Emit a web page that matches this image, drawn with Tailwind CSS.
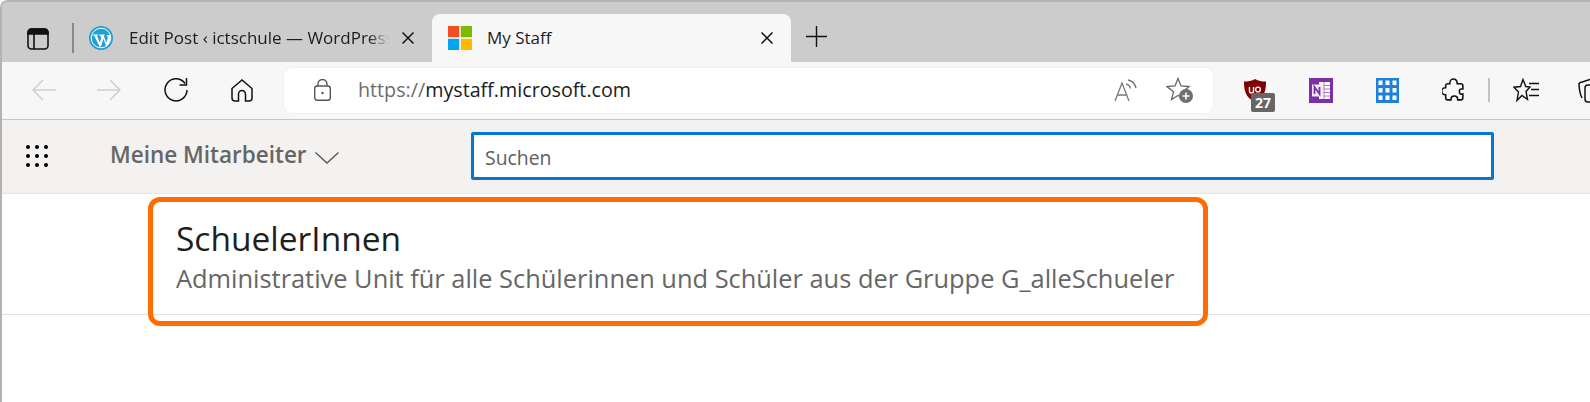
<!DOCTYPE html>
<html lang="de">
<head>
  <meta charset="UTF-8">
  <meta name="viewport" content="width=device-width, initial-scale=1.0">
  <title>My Staff</title>
  <script src="https://cdn.jsdelivr.net/npm/@tailwindcss/browser@4"></script>
</head>
<body class="bg-white w-[1590px] h-[402px] overflow-hidden font-['Open_Sans',sans-serif]">
  <div class="h-[402px] border-l-2 border-t-2 border-[#b3b3b3] rounded-tl-lg overflow-hidden">

    <!-- Tab strip -->
    <div class="h-[60px] bg-[#cccccc] flex items-end">
      <div class="w-[430px] h-[48px] flex items-center shrink-0">
        <svg class="ml-[25px] w-[22px] h-[22px] mt-[2px]" viewBox="0 0 22 22" fill="none" stroke="#111" stroke-width="1.6">
          <rect x="1" y="1" width="20" height="20" rx="3.5"/>
          <path d="M1 6V4.5A3.5 3.5 0 0 1 4.5 1h13A3.5 3.5 0 0 1 21 4.5V6Z" fill="#111"/>
          <path d="M7 6v15"/>
        </svg>
        <div class="ml-[23px] w-[2px] h-[30px] bg-[#8a8a8a]"></div>
        <svg class="ml-[15px] w-[24px] h-[24px]" viewBox="0 0 24 24">
          <circle cx="12" cy="12" r="12" fill="#21a0d2"/>
          <circle cx="12" cy="12" r="9.8" fill="none" stroke="#fff" stroke-width="1"/>
          <path d="M3.6 8.6h5.6v.7l-1.1.1 2.6 7.4 1.5-4.5-1-2.9-.9-.1v-.7h5.4v.7l-1 .1 2.5 7.3 1.3-4c.5-1.8.1-3-1-3.2v-.6h3.2c1 3.3.4 7-2 10.2l-1.5 1.3-2.7-7.6-2.6 7.8-1.2.2L5 9.4l-1.4-.1Z" fill="#fff"/>
        </svg>
        <div class="ml-[16px] w-[260px] text-[17px] leading-[24px] text-[#1c1c1c] whitespace-nowrap overflow-hidden mask-r-from-[92%] mask-r-to-100%">Edit Post ‹ ictschule — WordPress</div>
        <svg class="ml-[13px] w-[12px] h-[12px]" viewBox="0 0 12 12" stroke="#111" stroke-width="1.5"><path d="M.5.5l11 11M11.5.5l-11 11"/></svg>
      </div>
      <div class="w-[359px] h-[48px] bg-[#f7f7f7] rounded-t-lg flex items-center shrink-0">
        <svg class="ml-[16px] w-[24px] h-[24px]" viewBox="0 0 24 24">
          <rect x="0" y="0" width="11.2" height="11.2" fill="#f25022"/>
          <rect x="12.8" y="0" width="11.2" height="11.2" fill="#7fba00"/>
          <rect x="0" y="12.8" width="11.2" height="11.2" fill="#00a4ef"/>
          <rect x="12.8" y="12.8" width="11.2" height="11.2" fill="#ffb900"/>
        </svg>
        <div class="ml-[15px] text-[17px] leading-[24px] text-[#1c1c1c]">My Staff</div>
        <svg class="ml-auto mr-[18px] w-[12px] h-[12px]" viewBox="0 0 12 12" stroke="#111" stroke-width="1.5"><path d="M.5.5l11 11M11.5.5l-11 11"/></svg>
      </div>
      <svg class="ml-[15px] mb-[15px] w-[21px] h-[21px] self-end" viewBox="0 0 21 21" stroke="#111" stroke-width="1.4"><path d="M0 10.5h21M10.5 0v21"/></svg>
    </div>

    <!-- Browser toolbar -->
    <div class="h-[58px] bg-[#f7f7f7] border-b border-[#c6c6c6] flex items-center pb-[1px] overflow-hidden">
      <svg class="ml-[30px] w-[24px] h-[22px] shrink-0" viewBox="0 0 24 22" fill="none" stroke="#cfcfcf" stroke-width="1.5"><path d="M24 11H1M11 1 1 11l10 10"/></svg>
      <svg class="ml-[41px] w-[24px] h-[22px] shrink-0" viewBox="0 0 24 22" fill="none" stroke="#cfcfcf" stroke-width="1.5"><path d="M0 11h23M13 1l10 10-10 10"/></svg>
      <svg class="ml-[43px] w-[24px] h-[24px] shrink-0" viewBox="0 0 24 24" fill="none" stroke="#111" stroke-width="1.5"><path d="M21 5.5A11 11 0 1 0 23 12"/><path d="M22.500 0v7h-7"/></svg>
      <svg class="ml-[43px] w-[22px] h-[23px] shrink-0" viewBox="0 0 22 23" fill="none" stroke="#111" stroke-width="1.5"><path d="M1 9.5 11 1l10 8.5V19a3 3 0 0 1-3 3h-3.5v-7a3.5 3.5 0 0 0-7 0v7H4a3 3 0 0 1-3-3Z"/></svg>
      <!-- Address bar -->
      <div class="ml-[31px] w-[929px] h-[45px] bg-white rounded-lg flex items-center shrink-0 shadow-[0_0_2px_rgba(0,0,0,0.08)]">
        <svg class="ml-[30px] w-[17px] h-[22px]" viewBox="0 0 17 22" fill="none" stroke="#555" stroke-width="1.4"><rect x=".7" y="7" width="15.6" height="14.3" rx="2.5"/><path d="M4 7V5a4.5 4.5 0 0 1 9 0v2"/><circle cx="8.5" cy="14" r="1.2" fill="#555" stroke="none"/></svg>
        <div class="ml-[27px] text-[19.7px] leading-[26px] text-[#1c1c1c] whitespace-nowrap"><span class="text-[#6b6b6b]">https://</span>mystaff.microsoft.com</div>
        <svg class="ml-auto w-[23px] h-[23px]" viewBox="0 0 23 23" fill="none" stroke="#777" stroke-width="1.3"><path d="M1 22 8 4l7 18M3.5 16h9"/><path d="M12 5c2.5.5 4 2 4.5 4.5M14 1c4 .8 7 3.5 8 8"/></svg>
        <svg class="ml-[29px] mr-[20px] w-[27px] h-[26px]" viewBox="0 0 27 26"><path d="M12 1.5 15 9l8 .6-6 5.2 1.5 7.7L12 18.5 5.5 22.5 7.5 14.800 1 9.600 9 9Z" fill="none" stroke="#666" stroke-width="1.3"/><circle cx="20" cy="19" r="7" fill="#6f6f6f"/><path d="M20 15.5v7M16.5 19h7" stroke="#fff" stroke-width="1.6"/></svg>
      </div>
      <!-- Extensions -->
      <div class="relative ml-[31px] w-[22px] h-[23px] shrink-0">
        <svg class="w-[22px] h-[23px]" viewBox="0 0 22 23"><path d="M11 0c3 2 7 2.5 11 2.5 0 8-1 16-11 20.500C1 18.500 0 10.500 0 2.500 4 2.500 8 2 11 0Z" fill="#800000"/><path d="M5.500 8v4a2 2 0 0 0 4 0V8" fill="none" stroke="#fff" stroke-width="1.4"/><circle cx="14" cy="10.500" r="2.400" fill="none" stroke="#fff" stroke-width="1.4"/></svg>
        <div class="absolute left-[7px] top-[14px] w-[24px] h-[19px] bg-[#666666] rounded-[2px] text-white text-[14px] font-bold leading-[19px] text-center">27</div>
      </div>
      <svg class="ml-[43px] w-[24px] h-[25px] shrink-0" viewBox="0 0 24 25"><rect width="24" height="25" fill="#7d2fa8"/><rect x="10" y="4" width="11" height="17" fill="#fff"/><path d="M15 4v17M15 7.500h6M15 11h6M15 14.500h6M15 18h6" stroke="#a878c6" stroke-width="1"/><rect x="3" y="6.500" width="11" height="12" fill="#f3ecf7"/><path d="M5.500 16V9l5 7V9" fill="none" stroke="#7d2fa8" stroke-width="1.800"/></svg>
      <svg class="ml-[43px] w-[23px] h-[25px] shrink-0" viewBox="0 0 23 25"><rect width="23" height="25" fill="#1f80dc"/><path d="M2.500 2.500h4v4.500h-4ZM9.500 2.500h4v4.500h-4ZM16.500 2.500h4v4.500h-4ZM2.500 10h4v4.500h-4ZM9.500 10h4v4.500h-4ZM16.500 10h4v4.500h-4ZM2.500 17.500h4V22h-4ZM9.500 17.500h4V22h-4ZM16.500 17.500h4V22h-4Z" fill="#fff"/></svg>
      <svg class="ml-[43px] w-[23px] h-[25px] shrink-0" viewBox="0 0 22 24" fill="none" stroke="#111" stroke-width="1.5"><path d="M7.500 4.500a3.500 3.500 0 0 1 7 0V5.500h3.500a2 2 0 0 1 2 2v3h-1.500a1.800 1.800 0 0 0-1.800 1.800v1.400a1.800 1.800 0 0 0 1.800 1.800H20v3.500a2 2 0 0 1-2 2h-3v-.5a3.200 3.200 0 0 0-6.400 0v.5H5.500a2 2 0 0 1-2-2v-3H3a3.300 3.300 0 0 1 0-6.600h.5V7.500a2 2 0 0 1 2-2h2Z"/></svg>
      <div class="ml-[23px] w-[2px] h-[24px] bg-[#c2c2c2] shrink-0"></div>
      <svg class="ml-[23px] w-[26px] h-[25px] shrink-0" viewBox="0 0 26 25" fill="none" stroke="#111" stroke-width="1.4"><path d="M10 1.500 12.800 8.500 17 9l-4 4.500 1.500 8L9 17.500l-5 5 1.500-8.500L1 9.200 7.500 8.500Z"/><path d="M16 5.500h10M18 11.500h8M16 17.500h10" stroke-width="1.4"/></svg>
      <svg class="ml-[39px] w-[22px] h-[25px] shrink-0" viewBox="0 0 22 25" fill="none" stroke="#111" stroke-width="1.5"><path d="M1 5 12 1.500c2-.5 3 .5 3.500 2l1 3"/><path d="M1 5c0 6 1 11 3 15"/><rect x="7" y="7" width="15" height="17" rx="3"/></svg>
    </div>

    <!-- My Staff header -->
    <div class="h-[74px] bg-[#f3f2f1] border-b border-[#e6e6e6] flex items-center pb-[1px]">
      <div class="ml-[24px] w-[22px] h-[22px] grid grid-cols-3 justify-between content-between shrink-0">
        <span class="w-[4px] h-[4px] rounded-full bg-black"></span><span class="w-[4px] h-[4px] rounded-full bg-black justify-self-center"></span><span class="w-[4px] h-[4px] rounded-full bg-black justify-self-end"></span>
        <span class="w-[4px] h-[4px] rounded-full bg-black"></span><span class="w-[4px] h-[4px] rounded-full bg-black justify-self-center"></span><span class="w-[4px] h-[4px] rounded-full bg-black justify-self-end"></span>
        <span class="w-[4px] h-[4px] rounded-full bg-black"></span><span class="w-[4px] h-[4px] rounded-full bg-black justify-self-center"></span><span class="w-[4px] h-[4px] rounded-full bg-black justify-self-end"></span>
      </div>
      <div class="ml-[62px] w-[195px] text-[22.5px] leading-[28px] font-semibold text-[#666666] whitespace-nowrap -mt-[2px] shrink-0">Meine Mitarbeiter</div>
      <svg class="ml-[10px] w-[24px] h-[12px] mt-[3px] shrink-0" viewBox="0 0 24 12" fill="none" stroke="#555" stroke-width="1.3"><path d="M.5.5 12 11 23.500.5"/></svg>
      <div class="ml-[132px] w-[1023px] h-[48px] bg-white border-[3px] border-[#0078d4] rounded-[2px] flex items-center pl-[11px] pt-[3px] text-[19.4px] text-[#605e5c] shrink-0">Suchen</div>
    </div>

    <!-- Administrative unit row -->
    <div class="relative h-[121px] border-b border-[#e1e1e1] pl-[174px] pt-[21px]">
      <div class="text-[33.5px] leading-[46px] text-[#201f1e] whitespace-nowrap">SchuelerInnen</div>
      <div class="text-[25.4px] leading-[34px] text-[#666666] whitespace-nowrap">Administrative Unit für alle Schülerinnen und Schüler aus der Gruppe G_alleSchueler</div>
      <!-- Orange annotation frame -->
      <div class="absolute left-[146px] top-[3px] w-[1060px] h-[129px] border-[5px] border-[#ff6c00] rounded-[12px]"></div>
    </div>
  </div>
</body>
</html>
